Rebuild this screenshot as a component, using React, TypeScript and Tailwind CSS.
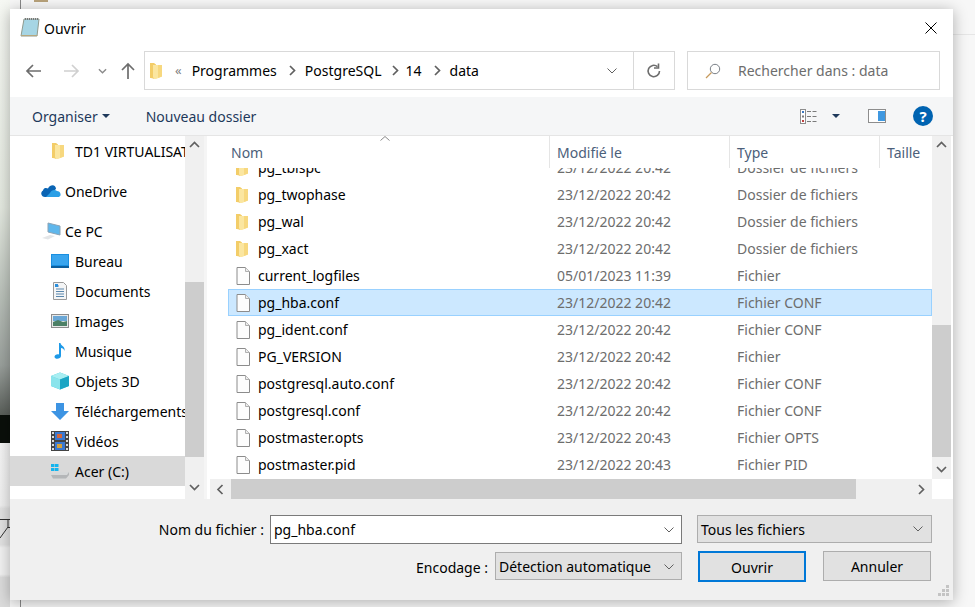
import type { ReactNode } from "react";

const FONT = "font-['Noto_Sans',sans-serif]";

function Folder({ className = "" }: { className?: string }) {
  return (
    <svg viewBox="0 0 12 16" className={className}>
      <path d="M0 0h4l2 1.500V15l-2 1c-1-1-3-1-4-1z" fill="#f3cd68" />
      <path d="M3 2h9v11.500L6 16H4c0-1-1-1.500-1-2z" fill="#fbe6a0" />
      <path d="M8 2h4v11.500L8 15z" fill="#f7d87f" />
    </svg>
  );
}

function FileIcon() {
  return (
    <svg viewBox="0 0 14 18" className="w-[14px] h-[18px] shrink-0 ml-[7px]">
      <path d="M1 .5h8.500l4 4v13H1z" fill="#fdfdfd" stroke="#8c8c8c" />
      <path d="M9.500 .5v4h4" fill="#ececec" stroke="#b0b0b0" />
    </svg>
  );
}

function Chevron({ dir, className = "" }: { dir: "up" | "down" | "left" | "right"; className?: string }) {
  const d = {
    up: "M1 7l4.500-4.500L10 7",
    down: "M1 3l4.500 4.500L10 3",
    left: "M7.500 1L3 5.500 7.500 10",
    right: "M3 1l4.500 4.500L3 10",
  }[dir];
  return (
    <svg viewBox="0 0 11 11" className={"w-[11px] h-[11px] " + className}>
      <path d={d} fill="none" stroke="#606060" strokeWidth="1.700" />
    </svg>
  );
}

function ComboArrow() {
  return (
    <svg viewBox="0 0 10 6" className="w-[10px] h-[6px]">
      <path d="M.5 .5L5 5 9.500 .5" fill="none" stroke="#606060" strokeWidth="1" />
    </svg>
  );
}

function NavArrow({ d, color }: { d: string; color: string }) {
  return (
    <svg viewBox="0 0 18 18" className="w-[18px] h-[18px]">
      <path d={d} fill="none" stroke={color} strokeWidth="1.700" />
    </svg>
  );
}

const navIcons: Record<string, ReactNode> = {
  onedrive: (
    <svg viewBox="0 0 21 14" className="w-[21px] h-[14px]">
      <path d="M5 13C1 13 0 8 3 6.500 4 3 7 4 8 4.500 10 0 16 0 16 5L10 10 7 13z" fill="#0a64b4" />
      <path d="M6 13l4-4c1-3 5-4 7-2 3 0 4 3 3.500 4.500L19 13z" fill="#2b9fe6" />
    </svg>
  ),
  pc: (
    <svg viewBox="0 0 20 18" className="w-[20px] h-[18px]">
      <path d="M7 1l12 3v9L7 10z" fill="#5fb7ec" stroke="#8ba3b5" />
      <path d="M1 16l8-3 5 1-7 3.500z" fill="#e4e6e8" />
    </svg>
  ),
  bureau: (
    <svg viewBox="0 0 18 14" className="w-[18px] h-[14px]">
      <rect width="18" height="13" fill="#1a8fe0" />
      <rect x="1" y="1" width="16" height="10" fill="#3aa5ee" />
      <rect y="12" width="18" height="2" fill="#0d5f9e" />
    </svg>
  ),
  docs: (
    <svg viewBox="0 0 14 18" className="w-[14px] h-[18px]">
      <path d="M.5 .5h10l3 3v14H.5z" fill="#f4f5f6" stroke="#9a9a9a" />
      <path d="M3 4h3M3 7h8M3 9.500h8M3 12h8M3 14.500h8" stroke="#5a87ad" strokeWidth="1" />
      <rect x="2" y="2" width="3" height="3" fill="#2a8fdd" />
    </svg>
  ),
  images: (
    <svg viewBox="0 0 18 14" className="w-[18px] h-[14px]">
      <rect x=".5" y=".5" width="17" height="13" fill="#e8e8e8" stroke="#8d8d8d" />
      <rect x="2" y="2" width="14" height="5" fill="#6aa7d6" />
      <path d="M2 8l5-2 5 2 4-1v5H2z" fill="#4c8066" />
    </svg>
  ),
  music: (
    <svg viewBox="0 0 12 18" className="w-[12px] h-[18px]">
      <path d="M5 1h1.500c0 3 5 3 4 8-.5-2-2-3-3.500-3v8c0 3-6 4-6.500 1-.3-2 3-3.500 4.500-2.500z" fill="#1e9ae8" />
    </svg>
  ),
  objects: (
    <svg viewBox="0 0 18 18" className="w-[18px] h-[18px]">
      <path d="M9 .5l9 3.500v10L9 17.500 0 14V4z" fill="#44c6d8" />
      <path d="M9 7.500V17.500L0 14V4z" fill="#8ae4ec" />
      <path d="M9 .5l9 3.500-9 3.500L0 4z" fill="#a8eef2" />
      <path d="M9 7.500l9-3.500v10L9 17.500z" fill="#1ba5c4" />
    </svg>
  ),
  downloads: (
    <svg viewBox="0 0 18 17" className="w-[18px] h-[17px]">
      <path d="M5 0h8v8h5l-9 9-9-9h5z" fill="#3d94e3" />
    </svg>
  ),
  videos: (
    <svg viewBox="0 0 18 20" className="w-[18px] h-[20px]">
      <rect width="18" height="20" fill="#444" />
      <path d="M1 1h2v2H1zM1 5h2v2H1zM1 9h2v2H1zM1 13h2v2H1zM1 17h2v2H1zM15 1h2v2h-2zM15 5h2v2h-2zM15 9h2v2h-2zM15 13h2v2h-2zM15 17h2v2h-2z" fill="#ddd" />
      <rect x="4" y="1" width="10" height="8" fill="#3a78d0" />
      <rect x="4" y="11" width="10" height="8" fill="#3a78d0" />
      <path d="M6 3h5v4H6z" fill="#d4663a" />
      <path d="M6 13h5v4H6z" fill="#d4a13a" />
    </svg>
  ),
  drive: (
    <svg viewBox="0 0 20 16" className="w-[20px] h-[16px]">
      <path d="M1 1h3.500v3H1zM5 1h3.500v3H5zM1 5h3.500v3H1zM5 5h3.500v3H5z" fill="#14b4ee" />
      <path d="M1 12l5-3h13v3l-3 3.500H3z" fill="#d6d8d9" />
      <path d="M1 12h16l2-3v3l-3 3.500H3z" fill="#b4b6b8" />
    </svg>
  ),
};

const navItems = [
  { label: "OneDrive", icon: "onedrive", top: true },
  { label: "Ce PC", icon: "pc", top: true },
  { label: "Bureau", icon: "bureau" },
  { label: "Documents", icon: "docs" },
  { label: "Images", icon: "images" },
  { label: "Musique", icon: "music" },
  { label: "Objets 3D", icon: "objects" },
  { label: "Téléchargements", icon: "downloads" },
  { label: "Vidéos", icon: "videos" },
  { label: "Acer (C:)", icon: "drive", selected: true },
];

const rows = [
  { name: "pg_tblspc", date: "23/12/2022 20:42", type: "Dossier de fichiers", folder: true },
  { name: "pg_twophase", date: "23/12/2022 20:42", type: "Dossier de fichiers", folder: true },
  { name: "pg_wal", date: "23/12/2022 20:42", type: "Dossier de fichiers", folder: true },
  { name: "pg_xact", date: "23/12/2022 20:42", type: "Dossier de fichiers", folder: true },
  { name: "current_logfiles", date: "05/01/2023 11:39", type: "Fichier" },
  { name: "pg_hba.conf", date: "23/12/2022 20:42", type: "Fichier CONF", selected: true },
  { name: "pg_ident.conf", date: "23/12/2022 20:42", type: "Fichier CONF" },
  { name: "PG_VERSION", date: "23/12/2022 20:42", type: "Fichier" },
  { name: "postgresql.auto.conf", date: "23/12/2022 20:42", type: "Fichier CONF" },
  { name: "postgresql.conf", date: "23/12/2022 20:42", type: "Fichier CONF" },
  { name: "postmaster.opts", date: "23/12/2022 20:43", type: "Fichier OPTS" },
  { name: "postmaster.pid", date: "23/12/2022 20:43", type: "Fichier PID" },
];

export default function App() {
  return (
    <div className={"w-[975px] h-[607px] overflow-hidden relative bg-[#f7f7f7] text-[14px] text-black " + FONT}>
      {/* desktop behind the dialog */}
      <div className="absolute left-0 top-0 w-[10px] h-[415px] bg-[linear-gradient(to_bottom,#f6f8f3_0%,#e4e9e0_50%,#b8bfb8_72%,#9aa09c_88%,#5a5f5a_100%)]" />
      <div className="absolute left-0 top-[415px] w-[10px] h-[28px] bg-[#0a0f0a]" />
      <div className="absolute left-0 top-[443px] w-[10px] h-[164px] bg-[linear-gradient(to_bottom,#f5f5f5_0%,#f0f0f0_38%,#e2e2e2_40%,#e2e2e2_62%,#f2f2f2_64%,#f2f2f2_80%,#dcdcdc_82%,#dcdcdc_100%)]" />
      <svg viewBox="0 0 10 20" className="absolute left-0 top-[519px] w-[10px] h-[20px]">
        <path d="M0 .5h10M8 .5v8H10M8 8L0 19" fill="none" stroke="#333" strokeWidth="1" />
      </svg>
      <div className="absolute left-[20px] top-0 w-px h-[9px] bg-[#888]" />
      <div className="absolute left-[34px] top-0 w-[14px] h-[2px] bg-[#b8a27a]" />
      <div className="absolute left-[20px] top-[600px] w-px h-[7px] bg-[#888]" />
      <div className="absolute left-[953px] top-[34px] w-[22px] h-px bg-[#e6e6e6]" />

      {/* dialog window */}
      <div className="absolute left-[10px] top-[9px] w-[943px] h-[591px] bg-white flex flex-col shadow-[0_2px_14px_rgba(0,0,0,0.3)]">
        {/* title bar */}
        <div className="h-[42px] flex items-center shrink-0 pl-[10px] pr-[16px] pb-[4px]">
          <svg viewBox="0 0 20 20" className="w-[20px] h-[20px] shrink-0">
            <path d="M4 1h15l-2 17H1z" fill="#a6d5e4" stroke="#8f9a8e" />
            <path d="M5 1h13" stroke="#777" strokeWidth="2" strokeDasharray="1 1" />
            <path d="M1 18h16l.5-1H1.500z" fill="#b6a77e" />
          </svg>
          <span className="ml-[4px]">Ouvrir</span>
          <svg viewBox="0 0 12 12" className="ml-auto w-[12px] h-[12px]">
            <path d="M.5 .5l11 11M11.500 .5l-11 11" stroke="#000" strokeWidth="1" />
          </svg>
        </div>

        {/* navigation bar */}
        <div className="h-[39px] flex shrink-0">
          <div className="w-[134px] flex items-center shrink-0 pl-[15px]">
            <NavArrow d="M16 9H2M8 3L2 9l6 6" color="#6d6d6d" />
            <span className="ml-[19px]"><NavArrow d="M2 9h14M10 3l6 6-6 6" color="#d0d0d0" /></span>
            <svg viewBox="0 0 10 6" className="ml-[18px] w-[9px] h-[6px]">
              <path d="M1 1l4 4 4-4" fill="none" stroke="#8a8a8a" strokeWidth="1.500" />
            </svg>
            <span className="ml-[12px]"><NavArrow d="M9 17V2M3 8l6-6 6 6" color="#6d6d6d" /></span>
          </div>
          <div className="w-[531px] border border-[#d9d9d9] flex items-center shrink-0">
            <Folder className="w-[12px] h-[16px] ml-[5px]" />
            <span className="ml-[13px] text-[13px] text-[#808080] leading-none">«</span>
            <span className="ml-[10px]">Programmes</span>
            <span className="ml-[10px]"><Chevron dir="right" className="w-[9px] h-[9px]" /></span>
            <span className="ml-[7px]">PostgreSQL</span>
            <span className="ml-[8px]"><Chevron dir="right" className="w-[9px] h-[9px]" /></span>
            <span className="ml-[5px]">14</span>
            <span className="ml-[10px]"><Chevron dir="right" className="w-[9px] h-[9px]" /></span>
            <span className="ml-[7px]">data</span>
            <div className="ml-auto flex items-center h-full">
              <ComboArrow />
              <div className="w-px h-full bg-[#d9d9d9] ml-[16px]" />
              <svg viewBox="0 0 16 16" className="w-[16px] h-[16px] mx-[12px]">
                <path d="M13.500 8a5.700 5.700 0 1 1-2-4.300" fill="none" stroke="#6d6d6d" strokeWidth="1.600" />
                <path d="M12.500 .5v4.500H8" fill="none" stroke="#6d6d6d" strokeWidth="1.600" />
              </svg>
            </div>
          </div>
          <div className="w-[253px] ml-[12px] border border-[#d9d9d9] flex items-center shrink-0">
            <svg viewBox="0 0 16 16" className="w-[16px] h-[16px] ml-[17px]">
              <circle cx="10" cy="6" r="4.700" fill="none" stroke="#7a8087" />
              <path d="M6.500 9.500L1 15" stroke="#c79a5c" strokeWidth="1.200" />
            </svg>
            <span className="ml-[17px] text-[#6d6d6d]">Rechercher dans : data</span>
          </div>
        </div>

        {/* toolbar */}
        <div className="mt-[7px] h-[39px] bg-[#f5f6f7] border-b border-[#e5e5e5] flex items-center shrink-0 text-[#1e395b]">
          <span className="ml-[22px]">Organiser</span>
          <svg viewBox="0 0 8 4" className="ml-[4px] w-[8px] h-[4px]">
            <path d="M0 0h8L4 4z" fill="#1e395b" />
          </svg>
          <span className="ml-[36px]">Nouveau dossier</span>
          <svg viewBox="0 0 18 15" className="ml-auto w-[18px] h-[15px]">
            <rect x=".5" y=".5" width="5" height="14" fill="#fff" stroke="#8d8d8d" />
            <rect x="2" y="2" width="2" height="2" fill="#3a78c0" />
            <rect x="2" y="6.500" width="2" height="2" fill="#7a7a7a" />
            <rect x="2" y="11" width="2" height="2" fill="#c04040" />
            <path d="M7 2.500h4M12.500 2.500h4M7 7.500h4M12.500 7.500h4M7 12.500h4M12.500 12.500h4" stroke="#7a7a7a" />
          </svg>
          <svg viewBox="0 0 8 4" className="ml-[14px] w-[8px] h-[4px]">
            <path d="M0 0h8L4 4z" fill="#1e395b" />
          </svg>
          <svg viewBox="0 0 18 14" className="ml-[28px] w-[18px] h-[14px]">
            <rect x=".5" y=".5" width="17" height="13" fill="#fff" stroke="#8d8d8d" />
            <rect x="10" y="2" width="7" height="10" fill="#3f98e0" />
          </svg>
          <div className="ml-[27px] mr-[20px] w-[20px] h-[20px] rounded-full bg-[#0063b1] text-white text-[15px] font-bold leading-[20px] text-center">?</div>
        </div>

        {/* body */}
        <div className="h-[363px] flex shrink-0">
          {/* navigation pane */}
          <div className="w-[175px] shrink-0 overflow-hidden">
            <div className="h-[30px] flex items-center whitespace-nowrap">
              <Folder className="w-[12px] h-[16px] ml-[42px] shrink-0" />
              <span className="ml-[11px]">TD1 VIRTUALISATION</span>
            </div>
            {navItems.map((item) => (
              <div
                key={item.label}
                className={
                  "h-[30px] flex items-center whitespace-nowrap " +
                  (item.top ? "mt-[10px] " : "") +
                  (item.selected ? "bg-[#d9d9d9]" : "")
                }
              >
                <span className={"flex justify-center shrink-0 " + (item.top ? "w-[21px] ml-[30px]" : "w-[20px] ml-[40px]")}>
                  {navIcons[item.icon]}
                </span>
                <span className={item.top ? "ml-[4px]" : "ml-[5px]"}>{item.label}</span>
              </div>
            ))}
          </div>
          {/* navigation scrollbar */}
          <div className="w-[22px] shrink-0 bg-[#f0f0f0] border-r-[3px] border-[#f5f5f5] flex flex-col items-center relative">
            <div className="h-[18px] flex items-center"><Chevron dir="up" /></div>
            <div className="mt-[128px] w-full h-[175px] bg-[#cdcdcd]" />
            <div className="mt-auto h-[24px] flex items-center"><Chevron dir="down" /></div>
          </div>
          {/* file list */}
          <div className="flex-1 min-w-0 flex flex-col">
            <div className="flex h-[343px]">
              <div className="w-[725px] flex flex-col overflow-hidden">
                <div className="h-[32px] flex text-[#4c607a] shrink-0 whitespace-nowrap">
                  <div className="w-[343px] pl-[24px] pt-[6px] border-r border-[#e5e5e5] relative">
                    Nom
                    <svg viewBox="0 0 10 5" className="absolute left-[173px] top-0 w-[10px] h-[5px]">
                      <path d="M.5 4.500L5 .5l4.500 4" fill="none" stroke="#888" />
                    </svg>
                  </div>
                  <div className="w-[180px] pl-[7px] pt-[6px] border-r border-[#e5e5e5]">Modifié le</div>
                  <div className="w-[150px] pl-[7px] pt-[6px] border-r border-[#e5e5e5]">Type</div>
                  <div className="pl-[7px] pt-[6px]">Taille</div>
                </div>
                {/* scrolled content: first row sits partly above the clip */}
                <div className="flex-1 overflow-hidden">
                  <div className="-mt-[14px] ml-[21px]">
                    {rows.map((row) => (
                      <div
                        key={row.name}
                        className={
                          "h-[27px] flex items-center whitespace-nowrap border " +
                          (row.selected ? "bg-[#cce8ff] border-[#99d1ff]" : "border-transparent")
                        }
                      >
                        {row.folder ? <Folder className="w-[12px] h-[16px] shrink-0 ml-[7px] mr-[2px]" /> : <FileIcon />}
                        <span className="ml-[8px] w-[299px] shrink-0">{row.name}</span>
                        <span className="w-[180px] shrink-0 text-[#6d6d6d]">{row.date}</span>
                        <span className="text-[#6d6d6d]">{row.type}</span>
                      </div>
                    ))}
                  </div>
                </div>
              </div>
              <div className="w-[19px] bg-[#f0f0f0] flex flex-col items-center shrink-0">
                <div className="h-[18px] flex items-center"><Chevron dir="up" /></div>
                <div className="mt-[171px] w-full h-[132px] bg-[#cdcdcd]" />
                <div className="mt-auto h-[20px] flex items-center"><Chevron dir="down" /></div>
              </div>
            </div>
            {/* horizontal scrollbar */}
            <div className="h-[20px] flex">
              <div className="w-[722px] ml-[3px] bg-[#f0f0f0] flex items-center">
                <span className="w-[21px] flex justify-center"><Chevron dir="left" /></span>
                <div className="w-[625px] h-full bg-[#cdcdcd]" />
                <span className="ml-auto w-[21px] flex justify-center"><Chevron dir="right" /></span>
              </div>
            </div>
          </div>
        </div>

        {/* footer */}
        <div className="flex-1 bg-[#f0f0f0] relative pt-[16px]">
          <div className="flex items-start">
            <span className="w-[254px] text-right leading-[29px]">Nom du fichier :</span>
            <div className="ml-[6px] w-[412px] h-[29px] bg-white border border-[#7a7a7a] flex items-center px-[3px]">
              pg_hba.conf
              <span className="ml-auto mr-[4px] flex"><ComboArrow /></span>
            </div>
            <div className="ml-[15px] w-[235px] h-[28px] bg-[#e1e1e1] border border-[#adadad] flex items-center px-[3px]">
              Tous les fichiers
              <span className="ml-auto mr-[5px] flex"><ComboArrow /></span>
            </div>
          </div>
          <div className="flex items-start mt-[8px]">
            <span className="w-[479px] pr-px text-right leading-[32px]">Encodage :</span>
            <div className="ml-[6px] w-[187px] h-[28px] bg-[#e1e1e1] border border-[#adadad] flex items-center px-[3px] pt-px">
              Détection automatique
              <span className="ml-auto mr-[4px] flex"><ComboArrow /></span>
            </div>
            <div className="ml-[16px] w-[108px] h-[31px] -mt-px bg-[#e1e1e1] border-2 border-[#0078d7] flex items-center justify-center pt-px">Ouvrir</div>
            <div className="ml-[17px] w-[108px] h-[30px] -mt-px bg-[#e1e1e1] border border-[#adadad] flex items-center justify-center pt-px">Annuler</div>
          </div>
          {/* resize grip */}
          <svg viewBox="0 0 12 12" className="absolute right-[3px] bottom-[3px] w-[12px] h-[12px]">
            <path d="M8 0h3v3H8zM4 4h3v3H4zM8 4h3v3H8zM0 8h3v3H0zM4 8h3v3H4zM8 8h3v3H8z" fill="#c4c4c4" />
          </svg>
        </div>
      </div>
    </div>
  );
}
